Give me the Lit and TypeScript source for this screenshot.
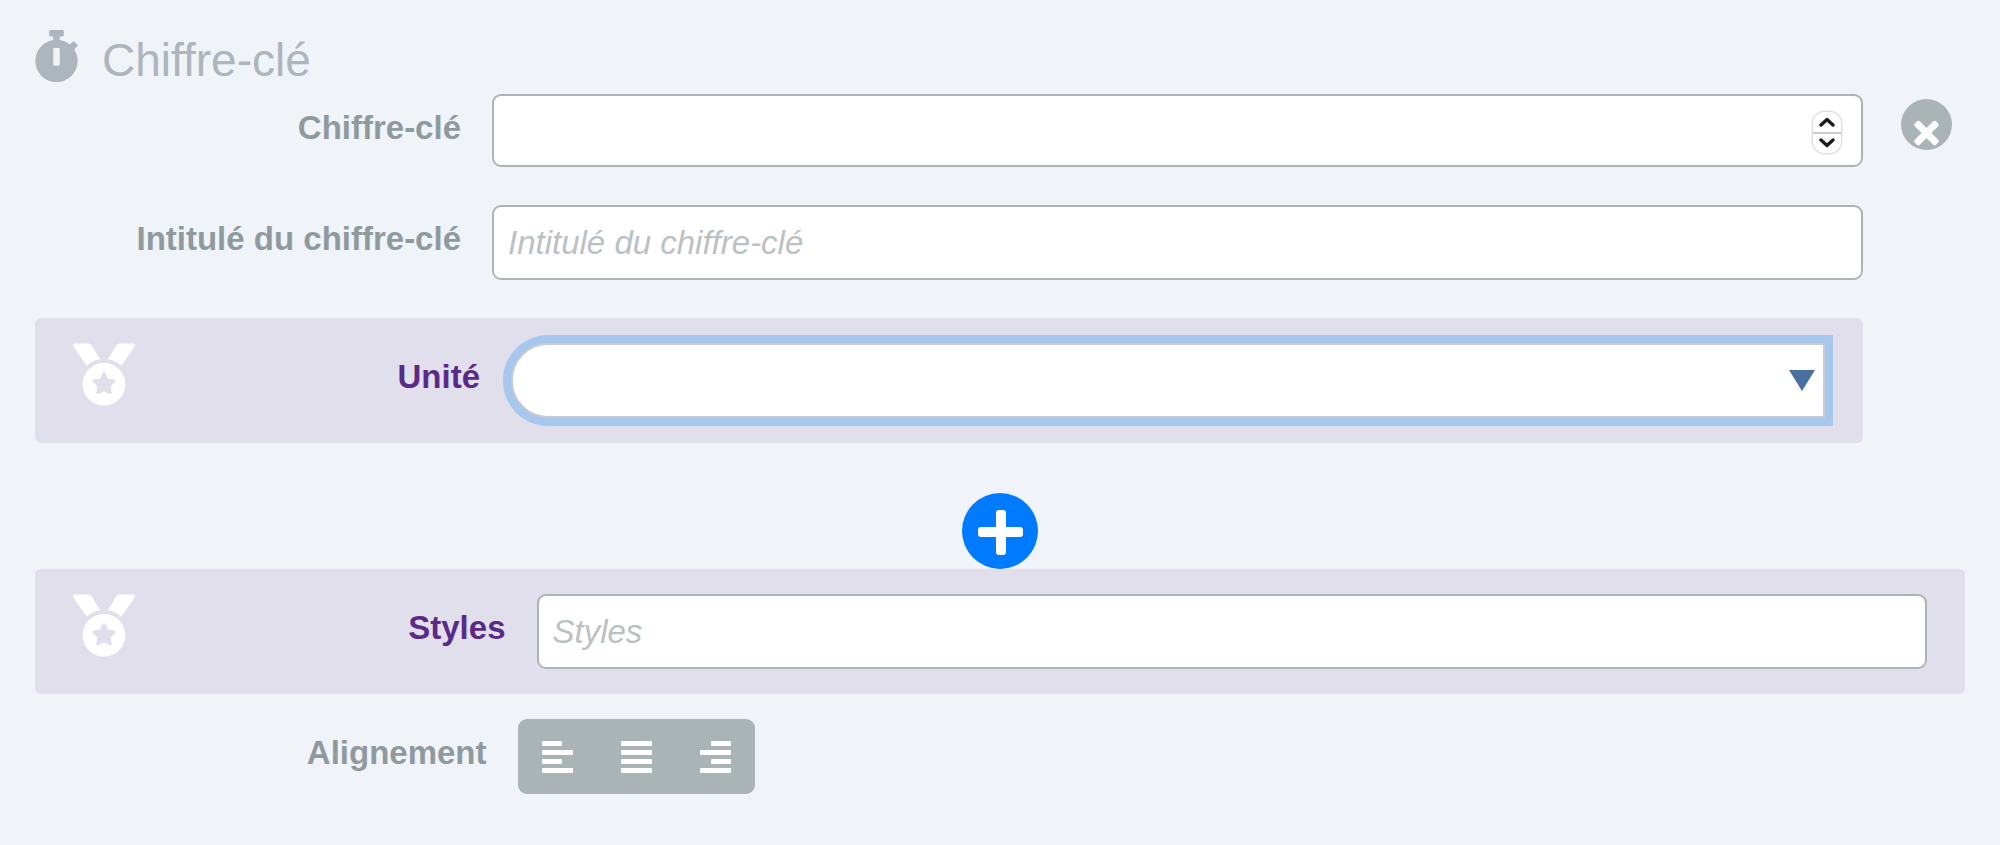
import { LitElement, html, css, svg } from "lit";
import { customElement } from "lit/decorators.js";

const medal = html`<svg class="medal" viewBox="0 0 512 512" aria-hidden="true">
  <path d="M223.75 130.75L154.62 15.54A31.997 31.997 0 0 0 127.18 0H16.03C3.08 0-4.5 14.57 2.92 25.18l111.27 158.96c29.72-27.77 67.52-46.83 109.56-53.39zM495.97 0H384.82c-11.24 0-21.66 5.9-27.44 15.54l-69.13 115.21c42.04 6.56 79.84 25.62 109.56 53.38L509.08 25.18C516.5 14.57 508.92 0 495.97 0zM256 160c-97.2 0-176 78.8-176 176s78.8 176 176 176 176-78.8 176-176-78.8-176-176-176zm92.52 157.26l-37.93 36.96 8.97 52.22c1.6 9.36-8.26 16.51-16.65 12.09L256 393.88l-46.9 24.65c-8.4 4.45-18.25-2.74-16.65-12.09l8.97-52.22-37.93-36.96c-6.82-6.64-3.05-18.23 6.35-19.59l52.43-7.64 23.43-47.52c2.11-4.28 6.19-6.39 10.28-6.39 4.11 0 8.22 2.14 10.33 6.39l23.43 47.52 52.43 7.64c9.4 1.36 13.17 12.95 6.35 19.59z"/>
</svg>`;

type Align = "left" | "justify" | "right";
const alignNames: Record<Align, string> = {
  left: "Aligner à gauche",
  justify: "Justifier",
  right: "Aligner à droite",
};

const alignIcon = (kind: Align) => html`<svg class="lines" viewBox="0 0 31 32" aria-hidden="true">
  ${[0, 1, 2, 3].map((i) => {
    const width = kind !== "justify" && i % 2 === 0 ? 20 : 31;
    const x = kind === "right" ? 31 - width : 0;
    return svg`<rect x=${x} y=${i * 9} width=${width} height="5" rx="1"/>`;
  })}
</svg>`;

@customElement("app-root")
export class AppRoot extends LitElement {
  static styles = css`
    :host {
      display: block;
      box-sizing: border-box;
      min-height: 100vh;
      padding: 30px 35px;
      background: #f0f4f9;
      color: #8f9a9f;
      font: 33px/38px "Liberation Sans", Arial, sans-serif;
    }
    *, *::before { box-sizing: border-box; }
    button { border: 0; padding: 0; cursor: pointer; font: inherit; }
    .title {
      display: flex;
      align-items: flex-start;
      gap: 24px;
      height: 52px;
      margin: 0 0 12px;
      color: #adb5bd;
      font: 300 46px/60px "Liberation Sans", Arial, sans-serif;
    }
    .watch { width: 43px; height: 52px; fill: currentColor; }
    .entry { display: flex; }
    .fields { flex: 1; display: flex; flex-direction: column; gap: 38px; min-width: 0; }
    .side { width: 102px; padding: 5px 0 0 38px; }
    .row { display: grid; grid-template-columns: 1fr 3fr; }
    .head { display: flex; justify-content: space-between; align-items: flex-start; }
    .label { margin-left: auto; padding: 15px 31px 0 0; font-weight: 700; white-space: nowrap; }
    .panel { padding: 25px 38px; border-radius: 6px; background: #e1dfeb; }
    .panel .label { color: #5b2a86; }
    .medal { width: 62px; height: 63px; fill: #fff; }
    .field { position: relative; display: flex; min-width: 0; }
    .input, .select {
      width: 100%;
      min-width: 0;
      height: 75px;
      margin: 0;
      padding: 0 14px;
      border: 2px solid #adb4b9;
      border-radius: 9px;
      background: #fff;
      color: #555;
      font: inherit;
      outline: 0;
    }
    .input::placeholder { color: #bbc1c3; font-style: italic; opacity: 1; }
    .number { height: 73px; appearance: textfield; -moz-appearance: textfield; }
    .number::-webkit-inner-spin-button, .number::-webkit-outer-spin-button { appearance: none; margin: 0; }
    .select {
      appearance: none;
      border-color: #c6ccd2;
      border-radius: 37px 0 0 37px;
      box-shadow: 0 0 0 8px #a8c7ef;
    }
    .arrow {
      position: absolute;
      right: 10px;
      top: 27px;
      width: 26px;
      height: 21px;
      fill: #4a709f;
      pointer-events: none;
    }
    .spinner {
      position: absolute;
      right: 21px;
      top: 17px;
      display: flex;
      flex-direction: column;
      width: 30px;
      height: 43px;
      overflow: hidden;
      border: 1px solid #dcdcdc;
      border-radius: 13px;
      background: #fff;
      box-shadow: 0 0 2px #ccc;
    }
    .step { flex: 1; display: flex; align-items: center; justify-content: center; background: #fff; }
    .step + .step { border-top: 2px solid #ccc; }
    .chevron { width: 16px; height: 10px; fill: none; stroke: #1c1c1c; stroke-width: 3.4; stroke-linecap: round; stroke-linejoin: round; }
    .round { display: block; border-radius: 50%; }
    .round svg { display: block; width: 100%; fill: #fff; }
    .remove { width: 51px; height: 51px; background: #aab4b7; }
    .add { width: 76px; height: 76px; margin: 50px auto 0; background: #007bff; }
    .last { margin-top: 25px; }
    .group { display: flex; overflow: hidden; border-radius: 9px; }
    .align {
      display: flex;
      align-items: center;
      justify-content: center;
      width: 79px;
      height: 75px;
      background: #aab3b6;
    }
    .lines { width: 31px; height: 32px; fill: #fff; }
  `;

  private step(delta: number) {
    const input = this.renderRoot.querySelector<HTMLInputElement>("#value")!;
    input.valueAsNumber = (input.valueAsNumber || 0) + delta;
  }

  render() {
    return html`
      <h1 class="title">
        <svg class="watch" viewBox="16 0 416 512" aria-hidden="true">
          <path d="M432 304c0 114.9-93.1 208-208 208S16 418.9 16 304c0-104 76.3-190.2 176-205.5V64h-28c-6.6 0-12-5.4-12-12V12c0-6.6 5.4-12 12-12h120c6.6 0 12 5.4 12 12v40c0 6.6-5.4 12-12 12h-28v34.5c37.5 5.8 71.7 21.6 99.7 44.6l27.5-27.5c4.7-4.7 12.3-4.7 17 0l28.3 28.3c4.7 4.7 4.7 12.3 0 17l-29.4 29.4-.6.6C419.7 223.3 432 262.2 432 304zm-176 36V188.5c0-6.6-5.4-12-12-12h-40c-6.6 0-12 5.4-12 12V340c0 6.6 5.4 12 12 12h40c6.6 0 12-5.4 12-12z"/>
        </svg>
        <span>Chiffre-clé</span>
      </h1>
      <div class="entry">
        <div class="fields">
          <div class="row">
            <div class="head"><label class="label" for="value">Chiffre-clé</label></div>
            <div class="field">
              <input class="input number" id="value" type="number">
              <div class="spinner">
                <button class="step" type="button" aria-label="Augmenter" @click=${() => this.step(1)}>
                  <svg class="chevron" viewBox="0 0 16 10"><path d="M2 8l6-5.5 6 5.5"/></svg>
                </button>
                <button class="step" type="button" aria-label="Diminuer" @click=${() => this.step(-1)}>
                  <svg class="chevron" viewBox="0 0 16 10"><path d="M2 2l6 5.5 6-5.5"/></svg>
                </button>
              </div>
            </div>
          </div>
          <div class="row">
            <div class="head"><label class="label" for="caption">Intitulé du chiffre-clé</label></div>
            <div class="field"><input class="input" id="caption" type="text" placeholder="Intitulé du chiffre-clé"></div>
          </div>
          <div class="row panel">
            <div class="head">${medal}<label class="label" for="unit">Unité</label></div>
            <div class="field">
              <select class="select" id="unit"><option value=""></option></select>
              <svg class="arrow" viewBox="0 0 26 21" aria-hidden="true"><path d="M0 0h26L13 21z"/></svg>
            </div>
          </div>
        </div>
        <div class="side">
          <button class="round remove" type="button" aria-label="Supprimer">
            <svg viewBox="0 0 51 51"><g transform="translate(25.5 34) rotate(45)"><rect x="-15" y="-3.5" width="30" height="7" rx="2"/><rect x="-3.5" y="-15" width="7" height="30" rx="2"/></g></svg>
          </button>
        </div>
      </div>
      <button class="round add" type="button" aria-label="Ajouter">
        <svg viewBox="0 0 76 76"><rect x="34" y="17" width="10" height="45" rx="3"/><rect x="16" y="34" width="45" height="10" rx="3"/></svg>
      </button>
      <div class="row panel">
        <div class="head">${medal}<label class="label" for="styles">Styles</label></div>
        <div class="field"><input class="input" id="styles" type="text" placeholder="Styles"></div>
      </div>
      <div class="row last">
        <div class="head"><span class="label" id="align-label">Alignement</span></div>
        <div class="field">
          <div class="group" role="group" aria-labelledby="align-label">
            ${(["left", "justify", "right"] as Align[]).map(
              (kind) => html`<button class="align" type="button" aria-label=${alignNames[kind]}>${alignIcon(kind)}</button>`
            )}
          </div>
        </div>
      </div>
    `;
  }
}
